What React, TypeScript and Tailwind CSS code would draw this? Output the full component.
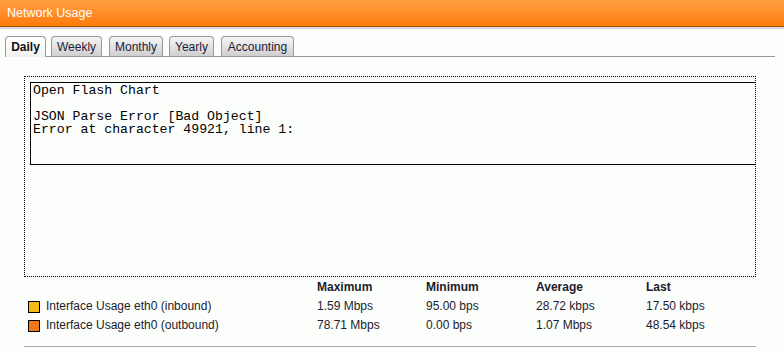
const tabs = [
  { name: "Daily", w: "w-[41px]", ml: "ml-0" },
  { name: "Weekly", w: "w-[51px]", ml: "ml-[5px]" },
  { name: "Monthly", w: "w-[54px]", ml: "ml-[7px]" },
  { name: "Yearly", w: "w-[45px]", ml: "ml-[6px]" },
  { name: "Accounting", w: "w-[73px]", ml: "ml-[7px]" },
];

const rows = [
  {
    label: "Interface Usage eth0 (inbound)",
    color: "bg-[#f8b818]",
    max: "1.59 Mbps",
    min: "95.00 bps",
    avg: "28.72 kbps",
    last: "17.50 kbps",
  },
  {
    label: "Interface Usage eth0 (outbound)",
    color: "bg-[#f07818]",
    max: "78.71 Mbps",
    min: "0.00 bps",
    avg: "1.07 Mbps",
    last: "48.54 kbps",
  },
];

const App = () => {
  return (
    <div className="h-[351px] w-[784px] overflow-hidden bg-[#fcfefc] font-['Liberation_Sans',Arial,sans-serif] text-[12px] text-[#1c1c2c]">
      {/* Header bar */}
      <div className="flex h-[27px] items-center border-b border-[#a85000] bg-gradient-to-b from-[#ffa040] to-[#ff7a00] pl-[7px] text-[12.5px] text-white shadow-[0_2px_1px_#d8d8d8]">
        Network Usage
      </div>

      {/* Tabs */}
      <div className="ml-[5px] mt-[9px] flex h-[21px] w-[770px] items-end border-b border-[#999]">
        {tabs.map((t, i) => (
          <div
            key={t.name}
            className={
              i === 0
                ? `-mb-px flex h-[21px] items-center justify-center rounded-t-[4px] border border-b-0 border-[#999] bg-gradient-to-b from-[#ffffff] to-[#f2f2f2] font-bold text-[#111] ${t.w} ${t.ml}`
                : `flex h-[20px] items-center justify-center rounded-t-[4px] border border-b-0 border-[#999] bg-gradient-to-b from-[#f6f6f6] to-[#cfcfcf] text-[#1c1c3c] ${t.w} ${t.ml}`
            }
          >
            {t.name}
          </div>
        ))}
      </div>

      {/* Chart area */}
      <div className="ml-[24px] mt-[19px] h-[201px] w-[732px] border border-dotted border-black pl-[5px] pt-[5px]">
        <div className="-mr-px h-[83px] border border-r-0 border-black pl-[2px] pt-[1px] font-['Liberation_Mono','Courier_New',monospace] text-[13.2px] leading-[13px] text-black">
          <div>Open Flash Chart</div>
          <div className="h-[13px]" />
          <div>JSON Parse Error [Bad Object]</div>
          <div>Error at character 49921, line 1:</div>
        </div>
      </div>

      {/* Legend table */}
      <div className="ml-[28px] mt-px grid grid-cols-[289px_109px_110px_110px_1fr] leading-[19px]">
        <div />
        <div className="font-bold">Maximum</div>
        <div className="font-bold">Minimum</div>
        <div className="font-bold">Average</div>
        <div className="font-bold">Last</div>
        {rows.map((r) => (
          <div key={r.label} className="contents">
            <div className="flex items-center gap-[6px]">
              <span className={`h-[12px] w-[12px] border border-black ${r.color}`} />
              <span>{r.label}</span>
            </div>
            <div>{r.max}</div>
            <div>{r.min}</div>
            <div>{r.avg}</div>
            <div>{r.last}</div>
          </div>
        ))}
      </div>

      <div className="ml-[24px] mt-[11px] w-[732px] border-b border-[#aaa]" />
    </div>
  );
};

export default App;
